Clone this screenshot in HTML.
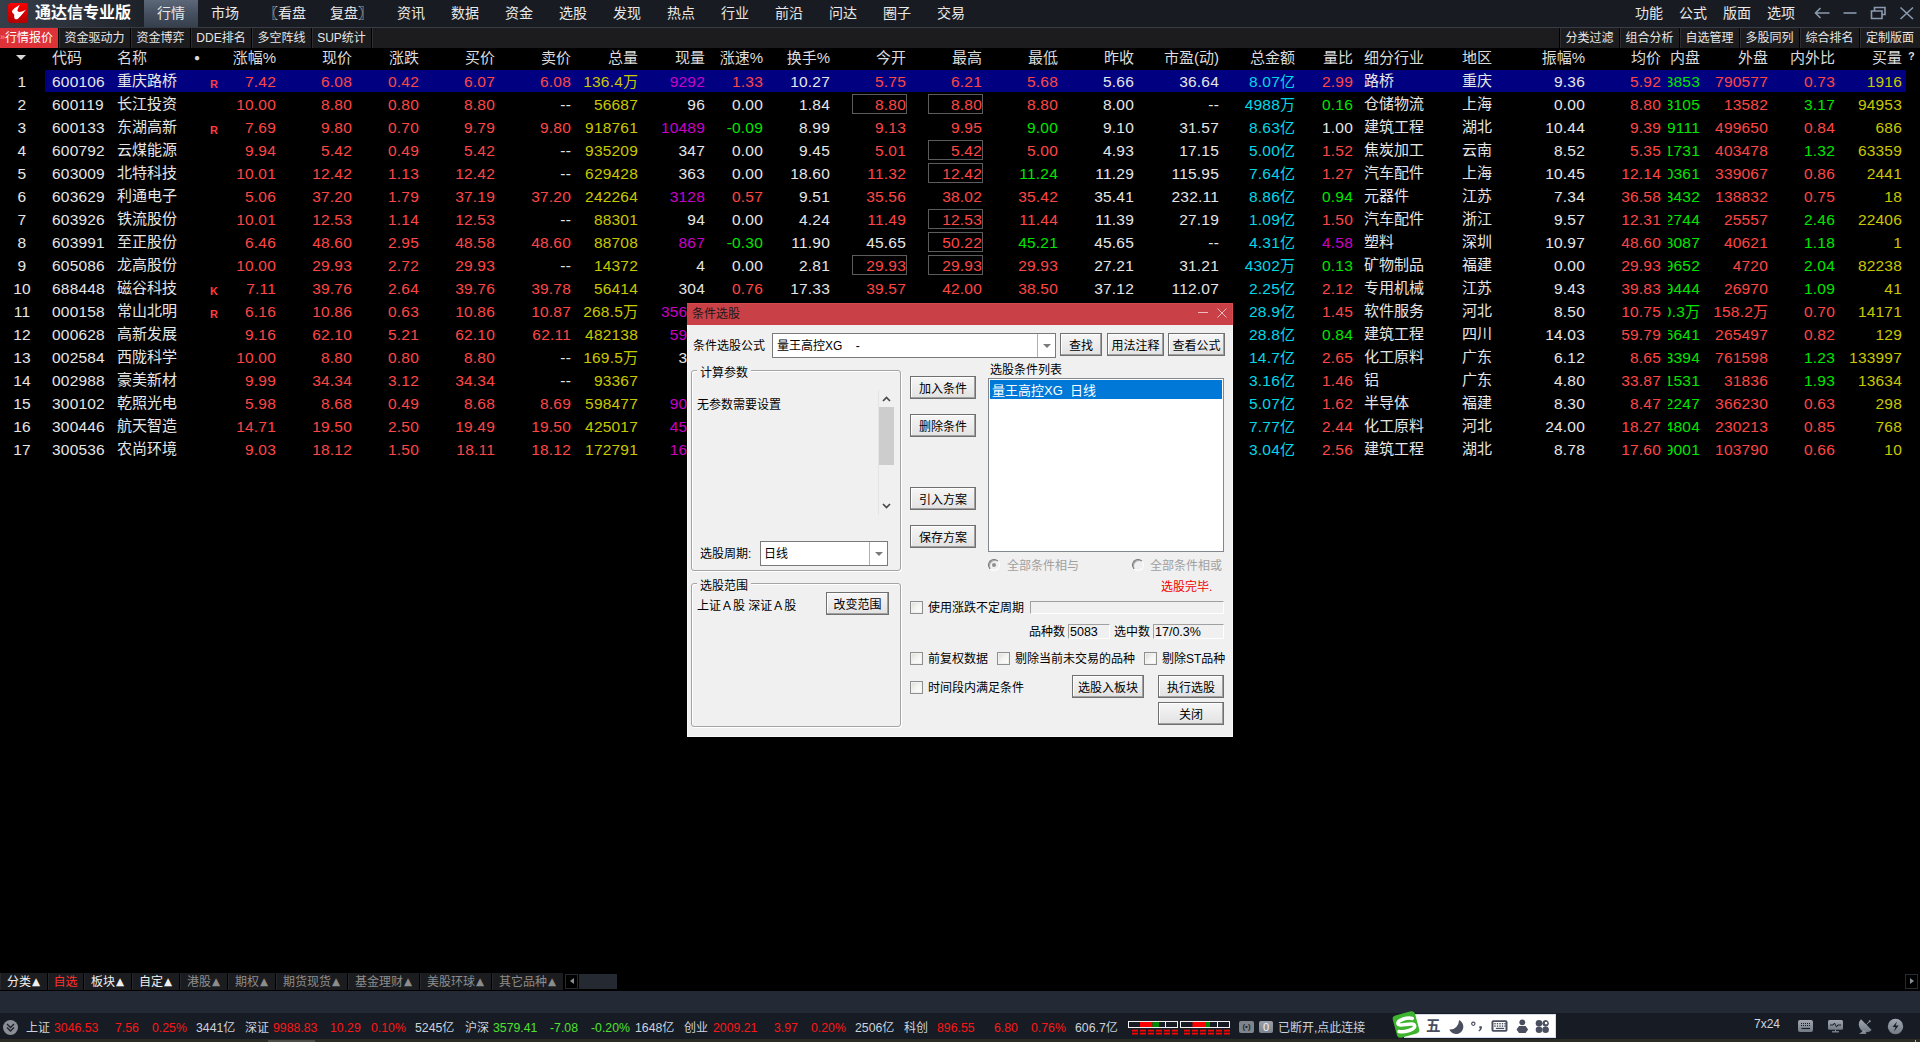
<!DOCTYPE html>
<html lang="zh-CN">
<head>
<meta charset="utf-8">
<title>通达信专业版</title>
<style>
*{box-sizing:border-box;margin:0;padding:0}
html,body{width:1920px;height:1042px;overflow:hidden;background:#000}
body{position:relative;font-family:"Liberation Sans","Noto Sans CJK SC",sans-serif;color:#e6e6e6}
div{position:absolute;white-space:nowrap}
/* title bar */
#tb{left:0;top:0;width:1920px;height:27px;background:#181c22}
#tbl{left:0;top:0;width:144px;height:27px;background:linear-gradient(90deg,#363e4a 0%,#2c323c 50%,#1d2128 100%)}
#logo{left:8px;top:3px;width:20px;height:20px;border-radius:3px;background:linear-gradient(180deg,#ff0000,#b00000)}
#ttl{left:35px;top:0;height:27px;line-height:25px;font-size:16px;font-weight:bold;color:#fff}
.mi{top:0;height:27px;line-height:27px;font-size:14px;color:#e8e8e8;text-align:center;width:54px}
.mi.act{background:linear-gradient(180deg,#5c6878 0%,#465060 50%,#363f4c 100%)}
.mr{top:0;height:27px;line-height:27px;font-size:14px;color:#e8e8e8}
/* second bar */
#sb{left:0;top:27px;width:1920px;height:21px;background:#1c1c1e;border-top:1px solid #383c46}
.st{top:28px;height:20px;line-height:21px;font-size:12px;color:#e6e6e6;text-align:center;box-shadow:1px 0 0 #000,2px 0 0 #2e2e32}
.st.act{background:#dc3238;color:#fff}
/* table */
#hdr{left:0;top:48px;width:1920px;height:22px}
.h{top:0;height:22px;line-height:20px;font-size:15px;color:#dcdcdc}
.r{text-align:right}
.tri{left:16px;top:7px;width:0;height:0;border-left:5px solid transparent;border-right:5px solid transparent;border-top:5px solid #d8d8d8}
.row{left:0;width:1920px;height:23px}
.selbg{left:45px;top:0;width:1861px;height:22px;background:#000080}
.n{top:0;height:22px;line-height:24px;font-size:15.5px;letter-spacing:.2px}
.z{top:0;height:22px;line-height:21px;font-size:15px}
.c{font-size:15px;letter-spacing:0}
.mk{top:8px;font-size:11px;font-weight:bold;color:#ff3c3c;line-height:12px}
.bx{top:1px;width:55px;height:20px;border:1px solid #5c5c5c}
.clipnp{left:1668px;width:32px;overflow:hidden;height:22px}
.clipnp>span{position:absolute;right:0;top:0}
#dlg{left:687px;top:303px;width:546px;height:434px;background:#f0f0f0;box-shadow:inset 0 0 0 1px #f8f8f8;color:#000;font-size:12px}
#dlg div{font-size:12px}
#dlg .li{font-size:13px}
#dt{left:0;top:0;width:546px;height:22px;background:#c94047;box-shadow:inset 0 1px 0 #d84a52,inset -1px 0 0 #dc4c54;color:#1a1a1a;line-height:21px}
.dl{line-height:16px;height:16px;color:#000;margin-top:1px}
.dis{color:#a0a0a0}
.gl{line-height:17px;height:16px;background:#f0f0f0;padding:0 3px;color:#000}
.gb{border:1px solid #a4a4a4;border-radius:3px;box-shadow:inset 1px 1px 0 #fff, 1px 1px 0 #fff}
.cb{background:#fff;border:1px solid #7a7a7a}
.cb .ct{position:absolute;left:4px;top:0;line-height:25px}
.cb .ca{position:absolute;right:0;top:0;bottom:0;width:18px;border-left:1px solid #b0b0b0}
.cb .ca:after{content:"";position:absolute;left:5px;top:10px;border-left:4px solid transparent;border-right:4px solid transparent;border-top:4px solid #7a7a7a}
.bt{background:linear-gradient(180deg,#f6f6f6,#e2e2e2);border:1px solid #707070;box-shadow:inset -1px -1px 0 #a0a0a0, inset 1px 1px 0 #fff;text-align:center;line-height:24px;color:#000}
.lb{background:#fff;border:1px solid #828790}
.li{left:1px;top:1px;right:1px;height:19px;background:#0078d7;color:#fff;line-height:21px;padding-left:2px}
.rd{width:12px;height:12px;border-radius:50%;border:1px solid;border-color:#707070 #fff #fff #707070;background:#f0f0f0;box-shadow:inset 1px 1px 0 #a8a8a8;transform:rotate(0deg)}
.rdd{width:4px;height:4px;border-radius:50%;background:#909090}
.ck{width:13px;height:13px;border:1px solid #8e8f8f;background:linear-gradient(135deg,#dcdad2,#f4f4f2 50%,#fff);box-shadow:inset 0 0 0 1px #f0f0f0}
.fd{border:1px solid;border-color:#a0a0a0 #fff #fff #a0a0a0;background:#f0f0f0}
.fd span{position:absolute;left:1px;top:0;line-height:15px;font-size:12.5px}

#bt1{left:0;top:973px;width:1920px;height:18px;background:#000}
.bt2{top:973px;height:17px;line-height:18px;font-size:12px;color:#8c8c8c;background:#1b1c1f;text-align:center;box-shadow:inset 1px 0 0 #26272a}
.bt2 b{font-weight:normal;font-size:10.5px;line-height:10px;display:inline-block;vertical-align:1px;margin-left:1px;font-family:"DejaVu Sans","Noto Sans CJK SC",sans-serif}
.bt2.w{color:#f0f0f0}
.bt2.rr{color:#ff3030}
#sb1{left:0;top:991px;width:1920px;height:22px;background:#232a35}
#sb2{left:0;top:1013px;width:1920px;height:27px;background:#171c24}
#sb3{left:0;top:1039px;width:1920px;height:3px;background:#2b2d24}
.s{top:1019px;height:18px;line-height:19px;font-size:12.3px;color:#ccd2dc}
.s span,.s.z{font-size:12px}
.r_{color:#f81818}
.g_{color:#50e030}
#ime{left:1404px;top:1014px;width:152px;height:24px;background:#fff;box-shadow:inset 0 0 0 1px #d4daf0}

</style>
</head>
<body>
<div id="tb"></div>
<div id="tbl"></div>
<div id="logo"></div>
<svg style="position:absolute;left:8px;top:3px" width="20" height="20" viewBox="0 0 20 20"><path d="M11.8 2.1C9 3.500 5 6 4 8.300C4.200 10 5.500 11 6.300 11.700C6 13 6 15 7.100 16.100C8 16.500 9.300 16.300 10 15.800C12.500 13 15.500 10 18 6.500C15.500 8 12.500 9.300 10.500 8.800C9.300 8.300 9.300 7.500 9.600 6.500C10 5 11 3.500 11.800 2.100Z" fill="#fff"/></svg>
<div id="ttl">通达信专业版</div>
<div class="mi act" style="left:144px">行情</div>
<div class="mi" style="left:198px">市场</div>
<div class="mi" style="left:252px;width:66px">〖看盘</div>
<div class="mi" style="left:318px;width:66px">复盘〗</div>
<div class="mi" style="left:384px">资讯</div>
<div class="mi" style="left:438px">数据</div>
<div class="mi" style="left:492px">资金</div>
<div class="mi" style="left:546px">选股</div>
<div class="mi" style="left:600px">发现</div>
<div class="mi" style="left:654px">热点</div>
<div class="mi" style="left:708px">行业</div>
<div class="mi" style="left:762px">前沿</div>
<div class="mi" style="left:816px">问达</div>
<div class="mi" style="left:870px">圈子</div>
<div class="mi" style="left:924px">交易</div>
<div class="mr" style="left:1635px">功能</div>
<div class="mr" style="left:1679px">公式</div>
<div class="mr" style="left:1723px">版面</div>
<div class="mr" style="left:1767px">选项</div>
<svg style="position:absolute;left:1812px;top:4px" width="104" height="18" viewBox="0 0 104 18"><g fill="none" stroke="#8b99ae" stroke-width="1.600"><path d="M3.500 9h14M8.500 4l-5 5l5 5"/><path d="M31.500 9h13"/><path d="M62.500 6.500v-3h10.500v7h-3M59.500 7h10.500v7.500h-10.500z"/><path d="M88.500 3.500l12.500 11.500M101 3.500l-12.500 11.500"/></g></svg>
<div id="sb"></div>
<div class="st act" style="left:0;width:58px">行情报价</div><div style="left:0;top:30px;font-size:9px;line-height:14px;color:#f4a0a4">»</div>
<div class="st" style="left:59px;width:71px">资金驱动力</div>
<div class="st" style="left:131px;width:59px">资金博弈</div>
<div class="st" style="left:191px;width:60px">DDE排名</div>
<div class="st" style="left:252px;width:59px">多空阵线</div>
<div class="st" style="left:312px;width:59px">SUP统计</div>
<div class="st" style="left:1560px;width:59px;box-shadow:1px 0 0 #000,2px 0 0 #2e2e32,-1px 0 0 #000,inset 1px 0 0 #2e2e32">分类过滤</div>
<div class="st" style="left:1620px;width:59px">组合分析</div>
<div class="st" style="left:1680px;width:59px">自选管理</div>
<div class="st" style="left:1740px;width:59px">多股同列</div>
<div class="st" style="left:1800px;width:59px">综合排名</div>
<div class="st" style="left:1860px;width:60px;box-shadow:none">定制版面</div>
<div id="hdr">
<div class="tri"></div>
<div class="h" style="left:52px">代码</div>
<div class="h" style="left:117px">名称</div>
<div class="h r" style="left:156px;width:120px">涨幅%</div>
<div class="h r" style="left:232px;width:120px">现价</div>
<div class="h r" style="left:299px;width:120px">涨跌</div>
<div class="h r" style="left:375px;width:120px">买价</div>
<div class="h r" style="left:451px;width:120px">卖价</div>
<div class="h r" style="left:518px;width:120px">总量</div>
<div class="h r" style="left:585px;width:120px">现量</div>
<div class="h r" style="left:643px;width:120px">涨速%</div>
<div class="h r" style="left:710px;width:120px">换手%</div>
<div class="h r" style="left:786px;width:120px">今开</div>
<div class="h r" style="left:862px;width:120px">最高</div>
<div class="h r" style="left:938px;width:120px">最低</div>
<div class="h r" style="left:1014px;width:120px">昨收</div>
<div class="h r" style="left:1099px;width:120px">市盈(动)</div>
<div class="h r" style="left:1175px;width:120px">总金额</div>
<div class="h r" style="left:1233px;width:120px">量比</div>
<div class="h" style="left:1364px">细分行业</div>
<div class="h" style="left:1462px">地区</div>
<div class="h r" style="left:1465px;width:120px">振幅%</div>
<div class="h r" style="left:1541px;width:120px">均价</div>
<div class="h r" style="left:1580px;width:120px">内盘</div>
<div class="h r" style="left:1648px;width:120px">外盘</div>
<div class="h r" style="left:1715px;width:120px">内外比</div>
<div class="h r" style="left:1782px;width:120px">买量</div>
<div class="h" style="left:194px;font-size:10px">●</div>
<div class="h" style="left:1908px;top:-2px;font-size:11px;font-weight:bold">?</div>
</div>
<div class="row sel" style="top:70px">
<div class="selbg"></div>
<div class="n" style="left:0;width:44px;text-align:center;color:#e6e6e6">1</div>
<div class="n" style="left:52px;color:#e6e6e6">600106</div>
<div class="z" style="left:117px;color:#e6e6e6">重庆路桥</div>
<div class="mk" style="left:210px">R</div>
<div class="n r" style="left:156px;width:120px;color:#ff4646">7.42</div>
<div class="n r" style="left:232px;width:120px;color:#ff4646">6.08</div>
<div class="n r" style="left:299px;width:120px;color:#ff4646">0.42</div>
<div class="n r" style="left:375px;width:120px;color:#ff4646">6.07</div>
<div class="n r" style="left:451px;width:120px;color:#ff4646">6.08</div>
<div class="n r" style="left:518px;width:120px;color:#c8c800">136.4<span class="c">万</span></div>
<div class="n r" style="left:585px;width:120px;color:#c800c8">9292</div>
<div class="n r" style="left:643px;width:120px;color:#ff4646">1.33</div>
<div class="n r" style="left:710px;width:120px;color:#e6e6e6">10.27</div>
<div class="n r" style="left:786px;width:120px;color:#ff4646">5.75</div>
<div class="n r" style="left:862px;width:120px;color:#ff4646">6.21</div>
<div class="n r" style="left:938px;width:120px;color:#ff4646">5.68</div>
<div class="n r" style="left:1014px;width:120px;color:#e6e6e6">5.66</div>
<div class="n r" style="left:1099px;width:120px;color:#e6e6e6">36.64</div>
<div class="n r" style="left:1175px;width:120px;color:#00d8e8">8.07<span class="c">亿</span></div>
<div class="n r" style="left:1233px;width:120px;color:#ff4646">2.99</div>
<div class="z" style="left:1364px;color:#e6e6e6">路桥</div>
<div class="z" style="left:1462px;color:#e6e6e6">重庆</div>
<div class="n r" style="left:1465px;width:120px;color:#e6e6e6">9.36</div>
<div class="n r" style="left:1541px;width:120px;color:#ff4646">5.92</div>
<div class="n r clipnp" style="color:#00e600"><span>833853</span></div>
<div class="n r" style="left:1648px;width:120px;color:#ff4646">790577</div>
<div class="n r" style="left:1715px;width:120px;color:#ff4646">0.73</div>
<div class="n r" style="left:1782px;width:120px;color:#c8c800">1916</div>
</div>
<div class="row" style="top:93px">
<div class="n" style="left:0;width:44px;text-align:center;color:#e6e6e6">2</div>
<div class="n" style="left:52px;color:#e6e6e6">600119</div>
<div class="z" style="left:117px;color:#e6e6e6">长江投资</div>
<div class="n r" style="left:156px;width:120px;color:#ff4646">10.00</div>
<div class="n r" style="left:232px;width:120px;color:#ff4646">8.80</div>
<div class="n r" style="left:299px;width:120px;color:#ff4646">0.80</div>
<div class="n r" style="left:375px;width:120px;color:#ff4646">8.80</div>
<div class="n r" style="left:451px;width:120px;color:#e6e6e6">--</div>
<div class="n r" style="left:518px;width:120px;color:#c8c800">56687</div>
<div class="n r" style="left:585px;width:120px;color:#e6e6e6">96</div>
<div class="n r" style="left:643px;width:120px;color:#e6e6e6">0.00</div>
<div class="n r" style="left:710px;width:120px;color:#e6e6e6">1.84</div>
<div class="n r" style="left:786px;width:120px;color:#ff4646">8.80</div><div class="bx" style="left:852px"></div>
<div class="n r" style="left:862px;width:120px;color:#ff4646">8.80</div><div class="bx" style="left:928px"></div>
<div class="n r" style="left:938px;width:120px;color:#ff4646">8.80</div>
<div class="n r" style="left:1014px;width:120px;color:#e6e6e6">8.00</div>
<div class="n r" style="left:1099px;width:120px;color:#e6e6e6">--</div>
<div class="n r" style="left:1175px;width:120px;color:#00d8e8">4988<span class="c">万</span></div>
<div class="n r" style="left:1233px;width:120px;color:#00e600">0.16</div>
<div class="z" style="left:1364px;color:#e6e6e6">仓储物流</div>
<div class="z" style="left:1462px;color:#e6e6e6">上海</div>
<div class="n r" style="left:1465px;width:120px;color:#e6e6e6">0.00</div>
<div class="n r" style="left:1541px;width:120px;color:#ff4646">8.80</div>
<div class="n r clipnp" style="color:#00e600"><span>43105</span></div>
<div class="n r" style="left:1648px;width:120px;color:#ff4646">13582</div>
<div class="n r" style="left:1715px;width:120px;color:#00e600">3.17</div>
<div class="n r" style="left:1782px;width:120px;color:#c8c800">94953</div>
</div>
<div class="row" style="top:116px">
<div class="n" style="left:0;width:44px;text-align:center;color:#e6e6e6">3</div>
<div class="n" style="left:52px;color:#e6e6e6">600133</div>
<div class="z" style="left:117px;color:#e6e6e6">东湖高新</div>
<div class="mk" style="left:210px">R</div>
<div class="n r" style="left:156px;width:120px;color:#ff4646">7.69</div>
<div class="n r" style="left:232px;width:120px;color:#ff4646">9.80</div>
<div class="n r" style="left:299px;width:120px;color:#ff4646">0.70</div>
<div class="n r" style="left:375px;width:120px;color:#ff4646">9.79</div>
<div class="n r" style="left:451px;width:120px;color:#ff4646">9.80</div>
<div class="n r" style="left:518px;width:120px;color:#c8c800">918761</div>
<div class="n r" style="left:585px;width:120px;color:#c800c8">10489</div>
<div class="n r" style="left:643px;width:120px;color:#00e600">-0.09</div>
<div class="n r" style="left:710px;width:120px;color:#e6e6e6">8.99</div>
<div class="n r" style="left:786px;width:120px;color:#ff4646">9.13</div>
<div class="n r" style="left:862px;width:120px;color:#ff4646">9.95</div>
<div class="n r" style="left:938px;width:120px;color:#00e600">9.00</div>
<div class="n r" style="left:1014px;width:120px;color:#e6e6e6">9.10</div>
<div class="n r" style="left:1099px;width:120px;color:#e6e6e6">31.57</div>
<div class="n r" style="left:1175px;width:120px;color:#00d8e8">8.63<span class="c">亿</span></div>
<div class="n r" style="left:1233px;width:120px;color:#e6e6e6">1.00</div>
<div class="z" style="left:1364px;color:#e6e6e6">建筑工程</div>
<div class="z" style="left:1462px;color:#e6e6e6">湖北</div>
<div class="n r" style="left:1465px;width:120px;color:#e6e6e6">10.44</div>
<div class="n r" style="left:1541px;width:120px;color:#ff4646">9.39</div>
<div class="n r clipnp" style="color:#00e600"><span>419111</span></div>
<div class="n r" style="left:1648px;width:120px;color:#ff4646">499650</div>
<div class="n r" style="left:1715px;width:120px;color:#ff4646">0.84</div>
<div class="n r" style="left:1782px;width:120px;color:#c8c800">686</div>
</div>
<div class="row" style="top:139px">
<div class="n" style="left:0;width:44px;text-align:center;color:#e6e6e6">4</div>
<div class="n" style="left:52px;color:#e6e6e6">600792</div>
<div class="z" style="left:117px;color:#e6e6e6">云煤能源</div>
<div class="n r" style="left:156px;width:120px;color:#ff4646">9.94</div>
<div class="n r" style="left:232px;width:120px;color:#ff4646">5.42</div>
<div class="n r" style="left:299px;width:120px;color:#ff4646">0.49</div>
<div class="n r" style="left:375px;width:120px;color:#ff4646">5.42</div>
<div class="n r" style="left:451px;width:120px;color:#e6e6e6">--</div>
<div class="n r" style="left:518px;width:120px;color:#c8c800">935209</div>
<div class="n r" style="left:585px;width:120px;color:#e6e6e6">347</div>
<div class="n r" style="left:643px;width:120px;color:#e6e6e6">0.00</div>
<div class="n r" style="left:710px;width:120px;color:#e6e6e6">9.45</div>
<div class="n r" style="left:786px;width:120px;color:#ff4646">5.01</div>
<div class="n r" style="left:862px;width:120px;color:#ff4646">5.42</div><div class="bx" style="left:928px"></div>
<div class="n r" style="left:938px;width:120px;color:#ff4646">5.00</div>
<div class="n r" style="left:1014px;width:120px;color:#e6e6e6">4.93</div>
<div class="n r" style="left:1099px;width:120px;color:#e6e6e6">17.15</div>
<div class="n r" style="left:1175px;width:120px;color:#00d8e8">5.00<span class="c">亿</span></div>
<div class="n r" style="left:1233px;width:120px;color:#ff4646">1.52</div>
<div class="z" style="left:1364px;color:#e6e6e6">焦炭加工</div>
<div class="z" style="left:1462px;color:#e6e6e6">云南</div>
<div class="n r" style="left:1465px;width:120px;color:#e6e6e6">8.52</div>
<div class="n r" style="left:1541px;width:120px;color:#ff4646">5.35</div>
<div class="n r clipnp" style="color:#00e600"><span>531731</span></div>
<div class="n r" style="left:1648px;width:120px;color:#ff4646">403478</div>
<div class="n r" style="left:1715px;width:120px;color:#00e600">1.32</div>
<div class="n r" style="left:1782px;width:120px;color:#c8c800">63359</div>
</div>
<div class="row" style="top:162px">
<div class="n" style="left:0;width:44px;text-align:center;color:#e6e6e6">5</div>
<div class="n" style="left:52px;color:#e6e6e6">603009</div>
<div class="z" style="left:117px;color:#e6e6e6">北特科技</div>
<div class="n r" style="left:156px;width:120px;color:#ff4646">10.01</div>
<div class="n r" style="left:232px;width:120px;color:#ff4646">12.42</div>
<div class="n r" style="left:299px;width:120px;color:#ff4646">1.13</div>
<div class="n r" style="left:375px;width:120px;color:#ff4646">12.42</div>
<div class="n r" style="left:451px;width:120px;color:#e6e6e6">--</div>
<div class="n r" style="left:518px;width:120px;color:#c8c800">629428</div>
<div class="n r" style="left:585px;width:120px;color:#e6e6e6">363</div>
<div class="n r" style="left:643px;width:120px;color:#e6e6e6">0.00</div>
<div class="n r" style="left:710px;width:120px;color:#e6e6e6">18.60</div>
<div class="n r" style="left:786px;width:120px;color:#ff4646">11.32</div>
<div class="n r" style="left:862px;width:120px;color:#ff4646">12.42</div><div class="bx" style="left:928px"></div>
<div class="n r" style="left:938px;width:120px;color:#00e600">11.24</div>
<div class="n r" style="left:1014px;width:120px;color:#e6e6e6">11.29</div>
<div class="n r" style="left:1099px;width:120px;color:#e6e6e6">115.95</div>
<div class="n r" style="left:1175px;width:120px;color:#00d8e8">7.64<span class="c">亿</span></div>
<div class="n r" style="left:1233px;width:120px;color:#ff4646">1.27</div>
<div class="z" style="left:1364px;color:#e6e6e6">汽车配件</div>
<div class="z" style="left:1462px;color:#e6e6e6">上海</div>
<div class="n r" style="left:1465px;width:120px;color:#e6e6e6">10.45</div>
<div class="n r" style="left:1541px;width:120px;color:#ff4646">12.14</div>
<div class="n r clipnp" style="color:#00e600"><span>290361</span></div>
<div class="n r" style="left:1648px;width:120px;color:#ff4646">339067</div>
<div class="n r" style="left:1715px;width:120px;color:#ff4646">0.86</div>
<div class="n r" style="left:1782px;width:120px;color:#c8c800">2441</div>
</div>
<div class="row" style="top:185px">
<div class="n" style="left:0;width:44px;text-align:center;color:#e6e6e6">6</div>
<div class="n" style="left:52px;color:#e6e6e6">603629</div>
<div class="z" style="left:117px;color:#e6e6e6">利通电子</div>
<div class="n r" style="left:156px;width:120px;color:#ff4646">5.06</div>
<div class="n r" style="left:232px;width:120px;color:#ff4646">37.20</div>
<div class="n r" style="left:299px;width:120px;color:#ff4646">1.79</div>
<div class="n r" style="left:375px;width:120px;color:#ff4646">37.19</div>
<div class="n r" style="left:451px;width:120px;color:#ff4646">37.20</div>
<div class="n r" style="left:518px;width:120px;color:#c8c800">242264</div>
<div class="n r" style="left:585px;width:120px;color:#c800c8">3128</div>
<div class="n r" style="left:643px;width:120px;color:#ff4646">0.57</div>
<div class="n r" style="left:710px;width:120px;color:#e6e6e6">9.51</div>
<div class="n r" style="left:786px;width:120px;color:#ff4646">35.56</div>
<div class="n r" style="left:862px;width:120px;color:#ff4646">38.02</div>
<div class="n r" style="left:938px;width:120px;color:#ff4646">35.42</div>
<div class="n r" style="left:1014px;width:120px;color:#e6e6e6">35.41</div>
<div class="n r" style="left:1099px;width:120px;color:#e6e6e6">232.11</div>
<div class="n r" style="left:1175px;width:120px;color:#00d8e8">8.86<span class="c">亿</span></div>
<div class="n r" style="left:1233px;width:120px;color:#00e600">0.94</div>
<div class="z" style="left:1364px;color:#e6e6e6">元器件</div>
<div class="z" style="left:1462px;color:#e6e6e6">江苏</div>
<div class="n r" style="left:1465px;width:120px;color:#e6e6e6">7.34</div>
<div class="n r" style="left:1541px;width:120px;color:#ff4646">36.58</div>
<div class="n r clipnp" style="color:#00e600"><span>103432</span></div>
<div class="n r" style="left:1648px;width:120px;color:#ff4646">138832</div>
<div class="n r" style="left:1715px;width:120px;color:#ff4646">0.75</div>
<div class="n r" style="left:1782px;width:120px;color:#c8c800">18</div>
</div>
<div class="row" style="top:208px">
<div class="n" style="left:0;width:44px;text-align:center;color:#e6e6e6">7</div>
<div class="n" style="left:52px;color:#e6e6e6">603926</div>
<div class="z" style="left:117px;color:#e6e6e6">铁流股份</div>
<div class="n r" style="left:156px;width:120px;color:#ff4646">10.01</div>
<div class="n r" style="left:232px;width:120px;color:#ff4646">12.53</div>
<div class="n r" style="left:299px;width:120px;color:#ff4646">1.14</div>
<div class="n r" style="left:375px;width:120px;color:#ff4646">12.53</div>
<div class="n r" style="left:451px;width:120px;color:#e6e6e6">--</div>
<div class="n r" style="left:518px;width:120px;color:#c8c800">88301</div>
<div class="n r" style="left:585px;width:120px;color:#e6e6e6">94</div>
<div class="n r" style="left:643px;width:120px;color:#e6e6e6">0.00</div>
<div class="n r" style="left:710px;width:120px;color:#e6e6e6">4.24</div>
<div class="n r" style="left:786px;width:120px;color:#ff4646">11.49</div>
<div class="n r" style="left:862px;width:120px;color:#ff4646">12.53</div><div class="bx" style="left:928px"></div>
<div class="n r" style="left:938px;width:120px;color:#ff4646">11.44</div>
<div class="n r" style="left:1014px;width:120px;color:#e6e6e6">11.39</div>
<div class="n r" style="left:1099px;width:120px;color:#e6e6e6">27.19</div>
<div class="n r" style="left:1175px;width:120px;color:#00d8e8">1.09<span class="c">亿</span></div>
<div class="n r" style="left:1233px;width:120px;color:#ff4646">1.50</div>
<div class="z" style="left:1364px;color:#e6e6e6">汽车配件</div>
<div class="z" style="left:1462px;color:#e6e6e6">浙江</div>
<div class="n r" style="left:1465px;width:120px;color:#e6e6e6">9.57</div>
<div class="n r" style="left:1541px;width:120px;color:#ff4646">12.31</div>
<div class="n r clipnp" style="color:#00e600"><span>62744</span></div>
<div class="n r" style="left:1648px;width:120px;color:#ff4646">25557</div>
<div class="n r" style="left:1715px;width:120px;color:#00e600">2.46</div>
<div class="n r" style="left:1782px;width:120px;color:#c8c800">22406</div>
</div>
<div class="row" style="top:231px">
<div class="n" style="left:0;width:44px;text-align:center;color:#e6e6e6">8</div>
<div class="n" style="left:52px;color:#e6e6e6">603991</div>
<div class="z" style="left:117px;color:#e6e6e6">至正股份</div>
<div class="n r" style="left:156px;width:120px;color:#ff4646">6.46</div>
<div class="n r" style="left:232px;width:120px;color:#ff4646">48.60</div>
<div class="n r" style="left:299px;width:120px;color:#ff4646">2.95</div>
<div class="n r" style="left:375px;width:120px;color:#ff4646">48.58</div>
<div class="n r" style="left:451px;width:120px;color:#ff4646">48.60</div>
<div class="n r" style="left:518px;width:120px;color:#c8c800">88708</div>
<div class="n r" style="left:585px;width:120px;color:#c800c8">867</div>
<div class="n r" style="left:643px;width:120px;color:#00e600">-0.30</div>
<div class="n r" style="left:710px;width:120px;color:#e6e6e6">11.90</div>
<div class="n r" style="left:786px;width:120px;color:#e6e6e6">45.65</div>
<div class="n r" style="left:862px;width:120px;color:#ff4646">50.22</div><div class="bx" style="left:928px"></div>
<div class="n r" style="left:938px;width:120px;color:#00e600">45.21</div>
<div class="n r" style="left:1014px;width:120px;color:#e6e6e6">45.65</div>
<div class="n r" style="left:1099px;width:120px;color:#e6e6e6">--</div>
<div class="n r" style="left:1175px;width:120px;color:#00d8e8">4.31<span class="c">亿</span></div>
<div class="n r" style="left:1233px;width:120px;color:#c800c8">4.58</div>
<div class="z" style="left:1364px;color:#e6e6e6">塑料</div>
<div class="z" style="left:1462px;color:#e6e6e6">深圳</div>
<div class="n r" style="left:1465px;width:120px;color:#e6e6e6">10.97</div>
<div class="n r" style="left:1541px;width:120px;color:#ff4646">48.60</div>
<div class="n r clipnp" style="color:#00e600"><span>48087</span></div>
<div class="n r" style="left:1648px;width:120px;color:#ff4646">40621</div>
<div class="n r" style="left:1715px;width:120px;color:#00e600">1.18</div>
<div class="n r" style="left:1782px;width:120px;color:#c8c800">1</div>
</div>
<div class="row" style="top:254px">
<div class="n" style="left:0;width:44px;text-align:center;color:#e6e6e6">9</div>
<div class="n" style="left:52px;color:#e6e6e6">605086</div>
<div class="z" style="left:117px;color:#e6e6e6">龙高股份</div>
<div class="n r" style="left:156px;width:120px;color:#ff4646">10.00</div>
<div class="n r" style="left:232px;width:120px;color:#ff4646">29.93</div>
<div class="n r" style="left:299px;width:120px;color:#ff4646">2.72</div>
<div class="n r" style="left:375px;width:120px;color:#ff4646">29.93</div>
<div class="n r" style="left:451px;width:120px;color:#e6e6e6">--</div>
<div class="n r" style="left:518px;width:120px;color:#c8c800">14372</div>
<div class="n r" style="left:585px;width:120px;color:#e6e6e6">4</div>
<div class="n r" style="left:643px;width:120px;color:#e6e6e6">0.00</div>
<div class="n r" style="left:710px;width:120px;color:#e6e6e6">2.81</div>
<div class="n r" style="left:786px;width:120px;color:#ff4646">29.93</div><div class="bx" style="left:852px"></div>
<div class="n r" style="left:862px;width:120px;color:#ff4646">29.93</div><div class="bx" style="left:928px"></div>
<div class="n r" style="left:938px;width:120px;color:#ff4646">29.93</div>
<div class="n r" style="left:1014px;width:120px;color:#e6e6e6">27.21</div>
<div class="n r" style="left:1099px;width:120px;color:#e6e6e6">31.21</div>
<div class="n r" style="left:1175px;width:120px;color:#00d8e8">4302<span class="c">万</span></div>
<div class="n r" style="left:1233px;width:120px;color:#00e600">0.13</div>
<div class="z" style="left:1364px;color:#e6e6e6">矿物制品</div>
<div class="z" style="left:1462px;color:#e6e6e6">福建</div>
<div class="n r" style="left:1465px;width:120px;color:#e6e6e6">0.00</div>
<div class="n r" style="left:1541px;width:120px;color:#ff4646">29.93</div>
<div class="n r clipnp" style="color:#00e600"><span>9652</span></div>
<div class="n r" style="left:1648px;width:120px;color:#ff4646">4720</div>
<div class="n r" style="left:1715px;width:120px;color:#00e600">2.04</div>
<div class="n r" style="left:1782px;width:120px;color:#c8c800">82238</div>
</div>
<div class="row" style="top:277px">
<div class="n" style="left:0;width:44px;text-align:center;color:#e6e6e6">10</div>
<div class="n" style="left:52px;color:#e6e6e6">688448</div>
<div class="z" style="left:117px;color:#e6e6e6">磁谷科技</div>
<div class="mk" style="left:210px">K</div>
<div class="n r" style="left:156px;width:120px;color:#ff4646">7.11</div>
<div class="n r" style="left:232px;width:120px;color:#ff4646">39.76</div>
<div class="n r" style="left:299px;width:120px;color:#ff4646">2.64</div>
<div class="n r" style="left:375px;width:120px;color:#ff4646">39.76</div>
<div class="n r" style="left:451px;width:120px;color:#ff4646">39.78</div>
<div class="n r" style="left:518px;width:120px;color:#c8c800">56414</div>
<div class="n r" style="left:585px;width:120px;color:#e6e6e6">304</div>
<div class="n r" style="left:643px;width:120px;color:#ff4646">0.76</div>
<div class="n r" style="left:710px;width:120px;color:#e6e6e6">17.33</div>
<div class="n r" style="left:786px;width:120px;color:#ff4646">39.57</div>
<div class="n r" style="left:862px;width:120px;color:#ff4646">42.00</div>
<div class="n r" style="left:938px;width:120px;color:#ff4646">38.50</div>
<div class="n r" style="left:1014px;width:120px;color:#e6e6e6">37.12</div>
<div class="n r" style="left:1099px;width:120px;color:#e6e6e6">112.07</div>
<div class="n r" style="left:1175px;width:120px;color:#00d8e8">2.25<span class="c">亿</span></div>
<div class="n r" style="left:1233px;width:120px;color:#ff4646">2.12</div>
<div class="z" style="left:1364px;color:#e6e6e6">专用机械</div>
<div class="z" style="left:1462px;color:#e6e6e6">江苏</div>
<div class="n r" style="left:1465px;width:120px;color:#e6e6e6">9.43</div>
<div class="n r" style="left:1541px;width:120px;color:#ff4646">39.83</div>
<div class="n r clipnp" style="color:#00e600"><span>29444</span></div>
<div class="n r" style="left:1648px;width:120px;color:#ff4646">26970</div>
<div class="n r" style="left:1715px;width:120px;color:#00e600">1.09</div>
<div class="n r" style="left:1782px;width:120px;color:#c8c800">41</div>
</div>
<div class="row" style="top:300px">
<div class="n" style="left:0;width:44px;text-align:center;color:#e6e6e6">11</div>
<div class="n" style="left:52px;color:#e6e6e6">000158</div>
<div class="z" style="left:117px;color:#e6e6e6">常山北明</div>
<div class="mk" style="left:210px">R</div>
<div class="n r" style="left:156px;width:120px;color:#ff4646">6.16</div>
<div class="n r" style="left:232px;width:120px;color:#ff4646">10.86</div>
<div class="n r" style="left:299px;width:120px;color:#ff4646">0.63</div>
<div class="n r" style="left:375px;width:120px;color:#ff4646">10.86</div>
<div class="n r" style="left:451px;width:120px;color:#ff4646">10.87</div>
<div class="n r" style="left:518px;width:120px;color:#c8c800">268.5<span class="c">万</span></div>
<div class="n r" style="left:585px;width:120px;color:#c800c8">35635</div>
<div class="n r" style="left:643px;width:120px;color:#ff4646">0.18</div>
<div class="n r" style="left:710px;width:120px;color:#e6e6e6">17.15</div>
<div class="n r" style="left:786px;width:120px;color:#ff4646">10.40</div>
<div class="n r" style="left:862px;width:120px;color:#ff4646">11.10</div>
<div class="n r" style="left:938px;width:120px;color:#ff4646">10.23</div>
<div class="n r" style="left:1014px;width:120px;color:#e6e6e6">10.23</div>
<div class="n r" style="left:1099px;width:120px;color:#e6e6e6">--</div>
<div class="n r" style="left:1175px;width:120px;color:#00d8e8">28.9<span class="c">亿</span></div>
<div class="n r" style="left:1233px;width:120px;color:#ff4646">1.45</div>
<div class="z" style="left:1364px;color:#e6e6e6">软件服务</div>
<div class="z" style="left:1462px;color:#e6e6e6">河北</div>
<div class="n r" style="left:1465px;width:120px;color:#e6e6e6">8.50</div>
<div class="n r" style="left:1541px;width:120px;color:#ff4646">10.75</div>
<div class="n r clipnp" style="color:#00e600"><span>100.3<span class="c">万</span></span></div>
<div class="n r" style="left:1648px;width:120px;color:#ff4646">158.2<span class="c">万</span></div>
<div class="n r" style="left:1715px;width:120px;color:#ff4646">0.70</div>
<div class="n r" style="left:1782px;width:120px;color:#c8c800">14171</div>
</div>
<div class="row" style="top:323px">
<div class="n" style="left:0;width:44px;text-align:center;color:#e6e6e6">12</div>
<div class="n" style="left:52px;color:#e6e6e6">000628</div>
<div class="z" style="left:117px;color:#e6e6e6">高新发展</div>
<div class="n r" style="left:156px;width:120px;color:#ff4646">9.16</div>
<div class="n r" style="left:232px;width:120px;color:#ff4646">62.10</div>
<div class="n r" style="left:299px;width:120px;color:#ff4646">5.21</div>
<div class="n r" style="left:375px;width:120px;color:#ff4646">62.10</div>
<div class="n r" style="left:451px;width:120px;color:#ff4646">62.11</div>
<div class="n r" style="left:518px;width:120px;color:#c8c800">482138</div>
<div class="n r" style="left:585px;width:120px;color:#c800c8">5924</div>
<div class="n r" style="left:643px;width:120px;color:#ff4646">0.10</div>
<div class="n r" style="left:710px;width:120px;color:#e6e6e6">16.55</div>
<div class="n r" style="left:786px;width:120px;color:#00e600">55.70</div>
<div class="n r" style="left:862px;width:120px;color:#ff4646">62.58</div>
<div class="n r" style="left:938px;width:120px;color:#00e600">54.60</div>
<div class="n r" style="left:1014px;width:120px;color:#e6e6e6">56.89</div>
<div class="n r" style="left:1099px;width:120px;color:#e6e6e6">--</div>
<div class="n r" style="left:1175px;width:120px;color:#00d8e8">28.8<span class="c">亿</span></div>
<div class="n r" style="left:1233px;width:120px;color:#00e600">0.84</div>
<div class="z" style="left:1364px;color:#e6e6e6">建筑工程</div>
<div class="z" style="left:1462px;color:#e6e6e6">四川</div>
<div class="n r" style="left:1465px;width:120px;color:#e6e6e6">14.03</div>
<div class="n r" style="left:1541px;width:120px;color:#ff4646">59.79</div>
<div class="n r clipnp" style="color:#00e600"><span>216641</span></div>
<div class="n r" style="left:1648px;width:120px;color:#ff4646">265497</div>
<div class="n r" style="left:1715px;width:120px;color:#ff4646">0.82</div>
<div class="n r" style="left:1782px;width:120px;color:#c8c800">129</div>
</div>
<div class="row" style="top:346px">
<div class="n" style="left:0;width:44px;text-align:center;color:#e6e6e6">13</div>
<div class="n" style="left:52px;color:#e6e6e6">002584</div>
<div class="z" style="left:117px;color:#e6e6e6">西陇科学</div>
<div class="n r" style="left:156px;width:120px;color:#ff4646">10.00</div>
<div class="n r" style="left:232px;width:120px;color:#ff4646">8.80</div>
<div class="n r" style="left:299px;width:120px;color:#ff4646">0.80</div>
<div class="n r" style="left:375px;width:120px;color:#ff4646">8.80</div>
<div class="n r" style="left:451px;width:120px;color:#e6e6e6">--</div>
<div class="n r" style="left:518px;width:120px;color:#c8c800">169.5<span class="c">万</span></div>
<div class="n r" style="left:585px;width:120px;color:#e6e6e6">300</div>
<div class="n r" style="left:643px;width:120px;color:#e6e6e6">0.00</div>
<div class="n r" style="left:710px;width:120px;color:#e6e6e6">36.10</div>
<div class="n r" style="left:786px;width:120px;color:#ff4646">8.31</div>
<div class="n r" style="left:862px;width:120px;color:#ff4646">8.80</div><div class="bx" style="left:928px"></div>
<div class="n r" style="left:938px;width:120px;color:#ff4646">8.31</div>
<div class="n r" style="left:1014px;width:120px;color:#e6e6e6">8.00</div>
<div class="n r" style="left:1099px;width:120px;color:#e6e6e6">75.91</div>
<div class="n r" style="left:1175px;width:120px;color:#00d8e8">14.7<span class="c">亿</span></div>
<div class="n r" style="left:1233px;width:120px;color:#ff4646">2.65</div>
<div class="z" style="left:1364px;color:#e6e6e6">化工原料</div>
<div class="z" style="left:1462px;color:#e6e6e6">广东</div>
<div class="n r" style="left:1465px;width:120px;color:#e6e6e6">6.12</div>
<div class="n r" style="left:1541px;width:120px;color:#ff4646">8.65</div>
<div class="n r clipnp" style="color:#00e600"><span>933394</span></div>
<div class="n r" style="left:1648px;width:120px;color:#ff4646">761598</div>
<div class="n r" style="left:1715px;width:120px;color:#00e600">1.23</div>
<div class="n r" style="left:1782px;width:120px;color:#c8c800">133997</div>
</div>
<div class="row" style="top:369px">
<div class="n" style="left:0;width:44px;text-align:center;color:#e6e6e6">14</div>
<div class="n" style="left:52px;color:#e6e6e6">002988</div>
<div class="z" style="left:117px;color:#e6e6e6">豪美新材</div>
<div class="n r" style="left:156px;width:120px;color:#ff4646">9.99</div>
<div class="n r" style="left:232px;width:120px;color:#ff4646">34.34</div>
<div class="n r" style="left:299px;width:120px;color:#ff4646">3.12</div>
<div class="n r" style="left:375px;width:120px;color:#ff4646">34.34</div>
<div class="n r" style="left:451px;width:120px;color:#e6e6e6">--</div>
<div class="n r" style="left:518px;width:120px;color:#c8c800">93367</div>
<div class="n r" style="left:643px;width:120px;color:#e6e6e6">0.00</div>
<div class="n r" style="left:710px;width:120px;color:#e6e6e6">5.59</div>
<div class="n r" style="left:786px;width:120px;color:#ff4646">32.85</div>
<div class="n r" style="left:862px;width:120px;color:#ff4646">34.34</div><div class="bx" style="left:928px"></div>
<div class="n r" style="left:938px;width:120px;color:#ff4646">32.84</div>
<div class="n r" style="left:1014px;width:120px;color:#e6e6e6">31.22</div>
<div class="n r" style="left:1099px;width:120px;color:#e6e6e6">35.16</div>
<div class="n r" style="left:1175px;width:120px;color:#00d8e8">3.16<span class="c">亿</span></div>
<div class="n r" style="left:1233px;width:120px;color:#ff4646">1.46</div>
<div class="z" style="left:1364px;color:#e6e6e6">铝</div>
<div class="z" style="left:1462px;color:#e6e6e6">广东</div>
<div class="n r" style="left:1465px;width:120px;color:#e6e6e6">4.80</div>
<div class="n r" style="left:1541px;width:120px;color:#ff4646">33.87</div>
<div class="n r clipnp" style="color:#00e600"><span>61531</span></div>
<div class="n r" style="left:1648px;width:120px;color:#ff4646">31836</div>
<div class="n r" style="left:1715px;width:120px;color:#00e600">1.93</div>
<div class="n r" style="left:1782px;width:120px;color:#c8c800">13634</div>
</div>
<div class="row" style="top:392px">
<div class="n" style="left:0;width:44px;text-align:center;color:#e6e6e6">15</div>
<div class="n" style="left:52px;color:#e6e6e6">300102</div>
<div class="z" style="left:117px;color:#e6e6e6">乾照光电</div>
<div class="n r" style="left:156px;width:120px;color:#ff4646">5.98</div>
<div class="n r" style="left:232px;width:120px;color:#ff4646">8.68</div>
<div class="n r" style="left:299px;width:120px;color:#ff4646">0.49</div>
<div class="n r" style="left:375px;width:120px;color:#ff4646">8.68</div>
<div class="n r" style="left:451px;width:120px;color:#ff4646">8.69</div>
<div class="n r" style="left:518px;width:120px;color:#c8c800">598477</div>
<div class="n r" style="left:585px;width:120px;color:#c800c8">9051</div>
<div class="n r" style="left:643px;width:120px;color:#ff4646">0.12</div>
<div class="n r" style="left:710px;width:120px;color:#e6e6e6">6.66</div>
<div class="n r" style="left:786px;width:120px;color:#ff4646">8.20</div>
<div class="n r" style="left:862px;width:120px;color:#ff4646">8.88</div>
<div class="n r" style="left:938px;width:120px;color:#ff4646">8.20</div>
<div class="n r" style="left:1014px;width:120px;color:#e6e6e6">8.19</div>
<div class="n r" style="left:1099px;width:120px;color:#e6e6e6">--</div>
<div class="n r" style="left:1175px;width:120px;color:#00d8e8">5.07<span class="c">亿</span></div>
<div class="n r" style="left:1233px;width:120px;color:#ff4646">1.62</div>
<div class="z" style="left:1364px;color:#e6e6e6">半导体</div>
<div class="z" style="left:1462px;color:#e6e6e6">福建</div>
<div class="n r" style="left:1465px;width:120px;color:#e6e6e6">8.30</div>
<div class="n r" style="left:1541px;width:120px;color:#ff4646">8.47</div>
<div class="n r clipnp" style="color:#00e600"><span>232247</span></div>
<div class="n r" style="left:1648px;width:120px;color:#ff4646">366230</div>
<div class="n r" style="left:1715px;width:120px;color:#ff4646">0.63</div>
<div class="n r" style="left:1782px;width:120px;color:#c8c800">298</div>
</div>
<div class="row" style="top:415px">
<div class="n" style="left:0;width:44px;text-align:center;color:#e6e6e6">16</div>
<div class="n" style="left:52px;color:#e6e6e6">300446</div>
<div class="z" style="left:117px;color:#e6e6e6">航天智造</div>
<div class="n r" style="left:156px;width:120px;color:#ff4646">14.71</div>
<div class="n r" style="left:232px;width:120px;color:#ff4646">19.50</div>
<div class="n r" style="left:299px;width:120px;color:#ff4646">2.50</div>
<div class="n r" style="left:375px;width:120px;color:#ff4646">19.49</div>
<div class="n r" style="left:451px;width:120px;color:#ff4646">19.50</div>
<div class="n r" style="left:518px;width:120px;color:#c8c800">425017</div>
<div class="n r" style="left:585px;width:120px;color:#c800c8">4521</div>
<div class="n r" style="left:643px;width:120px;color:#ff4646">0.26</div>
<div class="n r" style="left:710px;width:120px;color:#e6e6e6">13.45</div>
<div class="n r" style="left:786px;width:120px;color:#ff4646">17.00</div>
<div class="n r" style="left:862px;width:120px;color:#ff4646">20.40</div>
<div class="n r" style="left:938px;width:120px;color:#00e600">16.90</div>
<div class="n r" style="left:1014px;width:120px;color:#e6e6e6">17.00</div>
<div class="n r" style="left:1099px;width:120px;color:#e6e6e6">38.71</div>
<div class="n r" style="left:1175px;width:120px;color:#00d8e8">7.77<span class="c">亿</span></div>
<div class="n r" style="left:1233px;width:120px;color:#ff4646">2.44</div>
<div class="z" style="left:1364px;color:#e6e6e6">化工原料</div>
<div class="z" style="left:1462px;color:#e6e6e6">河北</div>
<div class="n r" style="left:1465px;width:120px;color:#e6e6e6">24.00</div>
<div class="n r" style="left:1541px;width:120px;color:#ff4646">18.27</div>
<div class="n r clipnp" style="color:#00e600"><span>194804</span></div>
<div class="n r" style="left:1648px;width:120px;color:#ff4646">230213</div>
<div class="n r" style="left:1715px;width:120px;color:#ff4646">0.85</div>
<div class="n r" style="left:1782px;width:120px;color:#c8c800">768</div>
</div>
<div class="row" style="top:438px">
<div class="n" style="left:0;width:44px;text-align:center;color:#e6e6e6">17</div>
<div class="n" style="left:52px;color:#e6e6e6">300536</div>
<div class="z" style="left:117px;color:#e6e6e6">农尚环境</div>
<div class="n r" style="left:156px;width:120px;color:#ff4646">9.03</div>
<div class="n r" style="left:232px;width:120px;color:#ff4646">18.12</div>
<div class="n r" style="left:299px;width:120px;color:#ff4646">1.50</div>
<div class="n r" style="left:375px;width:120px;color:#ff4646">18.11</div>
<div class="n r" style="left:451px;width:120px;color:#ff4646">18.12</div>
<div class="n r" style="left:518px;width:120px;color:#c8c800">172791</div>
<div class="n r" style="left:585px;width:120px;color:#c800c8">1630</div>
<div class="n r" style="left:643px;width:120px;color:#ff4646">0.06</div>
<div class="n r" style="left:710px;width:120px;color:#e6e6e6">9.53</div>
<div class="n r" style="left:786px;width:120px;color:#00e600">16.60</div>
<div class="n r" style="left:862px;width:120px;color:#ff4646">18.30</div>
<div class="n r" style="left:938px;width:120px;color:#00e600">16.52</div>
<div class="n r" style="left:1014px;width:120px;color:#e6e6e6">16.62</div>
<div class="n r" style="left:1099px;width:120px;color:#e6e6e6">--</div>
<div class="n r" style="left:1175px;width:120px;color:#00d8e8">3.04<span class="c">亿</span></div>
<div class="n r" style="left:1233px;width:120px;color:#ff4646">2.56</div>
<div class="z" style="left:1364px;color:#e6e6e6">建筑工程</div>
<div class="z" style="left:1462px;color:#e6e6e6">湖北</div>
<div class="n r" style="left:1465px;width:120px;color:#e6e6e6">8.78</div>
<div class="n r" style="left:1541px;width:120px;color:#ff4646">17.60</div>
<div class="n r clipnp" style="color:#00e600"><span>69001</span></div>
<div class="n r" style="left:1648px;width:120px;color:#ff4646">103790</div>
<div class="n r" style="left:1715px;width:120px;color:#ff4646">0.66</div>
<div class="n r" style="left:1782px;width:120px;color:#c8c800">10</div>
</div>
<div id="dlg">
<div id="dt"><span style="position:absolute;left:5px;top:1px">条件选股</span>
<svg style="position:absolute;left:509px;top:4px" width="32" height="13" viewBox="0 0 32 13"><path d="M2 5.500h10M21.5 1.500l9 9M30.500 1.500l-9 9" stroke="#f0bcc0" stroke-width="1" fill="none"/></svg>
</div>
<div class="dl" style="left:6px;top:34px">条件选股公式</div>
<div class="cb" style="left:85px;top:30px;width:284px;height:25px"><span class="ct">量王高控XG&nbsp;&nbsp;&nbsp;&nbsp;-</span><i class="ca"></i></div>
<div class="bt" style="left:373px;top:30px;width:42px;height:23px">查找</div>
<div class="bt" style="left:420px;top:30px;width:57px;height:23px">用法注释</div>
<div class="bt" style="left:481px;top:30px;width:57px;height:23px">查看公式</div>
<div class="gb" style="left:4px;top:67px;width:210px;height:201px"></div>
<div class="gl" style="left:10px;top:62px">计算参数</div>
<div class="dl" style="left:10px;top:93px">无参数需要设置</div>
<div class="sc" style="left:191px;top:87px;width:17px;height:125px">
<svg style="position:absolute;left:0;top:0" width="17" height="125" viewBox="0 0 17 125"><rect x="0" y="0" width="1" height="125" fill="#e4e4e4"/><rect x="1" y="17" width="15" height="58" fill="#cdcdcd"/><path d="M5 11l3.5-3.5L12 11M5 114l3.5 3.5L12 114" stroke="#484848" stroke-width="1.700" fill="none"/></svg>
</div>
<div class="dl" style="left:13px;top:242px">选股周期:</div>
<div class="cb" style="left:73px;top:238px;width:128px;height:25px"><span class="ct" style="top:0;left:3px">日线</span><i class="ca"></i></div>
<div class="bt" style="left:223px;top:73px;width:66px;height:23px">加入条件</div>
<div class="bt" style="left:223px;top:111px;width:66px;height:23px">删除条件</div>
<div class="bt" style="left:223px;top:184px;width:66px;height:23px">引入方案</div>
<div class="bt" style="left:223px;top:222px;width:66px;height:23px">保存方案</div>
<div class="dl" style="left:303px;top:58px">选股条件列表</div>
<div class="lb" style="left:301px;top:75px;width:236px;height:174px"><div class="li">量王高控XG&nbsp;&nbsp;日线</div></div>
<div class="rd" style="left:301px;top:256px"></div><div class="rdd" style="left:305px;top:260px"></div>
<div class="dl dis" style="left:320px;top:254px">全部条件相与</div>
<div class="rd" style="left:445px;top:256px"></div>
<div class="dl dis" style="left:463px;top:254px">全部条件相或</div>
<div class="dl" style="left:474px;top:275px;color:#f00000">选股完毕.</div>
<div class="gb" style="left:4px;top:280px;width:210px;height:144px"></div>
<div class="gl" style="left:10px;top:275px">选股范围</div>
<div class="dl" style="left:10px;top:294px">上证Ａ股 深证Ａ股</div>
<div class="bt" style="left:139px;top:289px;width:63px;height:23px">改变范围</div>
<div class="ck" style="left:223px;top:298px"></div>
<div class="dl" style="left:241px;top:296px">使用涨跌不定周期</div>
<div class="fd" style="left:343px;top:298px;width:194px;height:13px"></div>
<div class="dl" style="left:342px;top:320px">品种数</div>
<div class="fd" style="left:381px;top:321px;width:42px;height:15px"><span>5083</span></div>
<div class="dl" style="left:427px;top:320px">选中数</div>
<div class="fd" style="left:466px;top:321px;width:71px;height:15px"><span>17/0.3%</span></div>
<div class="ck" style="left:223px;top:349px"></div>
<div class="dl" style="left:241px;top:347px">前复权数据</div>
<div class="ck" style="left:310px;top:349px"></div>
<div class="dl" style="left:328px;top:347px">剔除当前未交易的品种</div>
<div class="ck" style="left:457px;top:349px"></div>
<div class="dl" style="left:475px;top:347px">剔除ST品种</div>
<div class="ck" style="left:223px;top:378px"></div>
<div class="dl" style="left:241px;top:376px">时间段内满足条件</div>
<div class="bt" style="left:385px;top:372px;width:72px;height:23px">选股入板块</div>
<div class="bt" style="left:471px;top:372px;width:66px;height:23px">执行选股</div>
<div class="bt" style="left:471px;top:399px;width:66px;height:23px">关闭</div>
</div>

<div id="bt1"></div>
<div class="bt2 w" style="left:0;width:47px">分类<b>▲</b></div>
<div class="bt2 rr" style="left:48px;width:35px">自选</div>
<div class="bt2 w" style="left:84px;width:47px">板块<b>▲</b></div>
<div class="bt2 w" style="left:132px;width:47px">自定<b>▲</b></div>
<div class="bt2" style="left:180px;width:47px">港股<b>▲</b></div>
<div class="bt2" style="left:228px;width:47px">期权<b>▲</b></div>
<div class="bt2" style="left:276px;width:71px">期货现货<b>▲</b></div>
<div class="bt2" style="left:348px;width:71px">基金理财<b>▲</b></div>
<div class="bt2" style="left:420px;width:71px">美股环球<b>▲</b></div>
<div class="bt2" style="left:492px;width:71px">其它品种<b>▲</b></div>
<div style="left:565px;top:974px;width:13px;height:15px;border:1px solid #252a33;background:#000"></div>
<div style="left:570px;top:978px;width:0;height:0;border-top:3.5px solid transparent;border-bottom:3.5px solid transparent;border-right:4px solid #8a8e96"></div>
<div style="left:579px;top:974px;width:38px;height:15px;background:#242932"></div>
<div style="left:1905px;top:974px;width:13px;height:15px;border:1px solid #252a33;background:#000"></div>
<div style="left:1910px;top:978px;width:0;height:0;border-top:3.5px solid transparent;border-bottom:3.5px solid transparent;border-left:4px solid #8a8e96"></div>
<div id="sb1"></div>
<div id="sb2"></div>
<div id="sb3"></div>
<div style="left:268px;top:1040px;width:47px;height:2px;background:#4c4c48"></div>
<svg style="position:absolute;left:2px;top:1019px" width="17" height="17" viewBox="0 0 17 17"><circle cx="8.5" cy="8.5" r="7.5" fill="#8a8e96"/><path d="M5 5l3.5 3.5L12 5M5 8.5l3.5 3.5L12 8.5" stroke="#1c1f25" stroke-width="1.3" fill="none"/></svg>
<div class="s z" style="left:26px">上证</div><div class="s r_" style="left:54px">3046.53</div><div class="s r_" style="left:115px">7.56</div><div class="s r_" style="left:152px">0.25%</div><div class="s" style="left:196px">3441<span>亿</span></div>
<div class="s z" style="left:245px">深证</div><div class="s r_" style="left:273px">9988.83</div><div class="s r_" style="left:330px">10.29</div><div class="s r_" style="left:371px">0.10%</div><div class="s" style="left:415px">5245<span>亿</span></div>
<div class="s z" style="left:465px">沪深</div><div class="s g_" style="left:493px">3579.41</div><div class="s g_" style="left:550px">-7.08</div><div class="s g_" style="left:591px">-0.20%</div><div class="s" style="left:635px">1648<span>亿</span></div>
<div class="s z" style="left:684px">创业</div><div class="s r_" style="left:713px">2009.21</div><div class="s r_" style="left:774px">3.97</div><div class="s r_" style="left:811px">0.20%</div><div class="s" style="left:855px">2506<span>亿</span></div>
<div class="s z" style="left:904px">科创</div><div class="s r_" style="left:937px">896.55</div><div class="s r_" style="left:994px">6.80</div><div class="s r_" style="left:1031px">0.76%</div><div class="s" style="left:1075px">606.7<span>亿</span></div>
<svg style="position:absolute;left:1127px;top:1020px" width="104" height="16" viewBox="0 0 104 16">
<g fill="none" stroke="#f0f0f0" stroke-width="1"><rect x="1.5" y="1.5" width="49" height="6"/><rect x="53.500" y="1.500" width="49" height="6"/></g>
<rect x="13" y="2" width="12.500" height="5" fill="#ff0000"/><rect x="25.500" y="2" width="6.500" height="5" fill="#008a00"/><rect x="38" y="1" width="1" height="7" fill="#f0f0f0"/>
<rect x="65.500" y="2" width="12.500" height="5" fill="#ff0000"/><rect x="78" y="2" width="5" height="5" fill="#008a00"/><rect x="90" y="1" width="1" height="7" fill="#f0f0f0"/>
<g stroke="#ff0000" stroke-width="1.800" stroke-dasharray="6 2"><path d="M5 10.600h46M5 13.600h46M57 10.600h46M57 13.600h46"/></g>
</svg>
<div style="left:1239px;top:1021px;width:15px;height:12px;border-radius:2px;background:#7e848e"></div>
<div style="left:1239px;top:1021px;width:15px;height:12px;line-height:11px;font-size:8px;color:#22262c;text-align:center;font-weight:bold">(•)</div>
<div style="left:1259px;top:1021px;width:14px;height:12px;border-radius:2px;background:linear-gradient(180deg,#9aa0aa,#7e848e);color:#f4f4f4;font-size:11px;line-height:13px;text-align:center">0</div>
<div class="s z" style="left:1278px">已断开,点此连接</div>
<div id="ime"></div>
<svg style="position:absolute;left:1388px;top:1008px" width="36" height="34" viewBox="0 0 36 34"><g transform="translate(18 16.500) rotate(-15)"><rect x="-11.500" y="-11.500" width="23" height="23" rx="3.500" fill="#3db32e"/><path d="M7.500 -4.300C3 -7 -7.500 -6.500 -7.500 -2.800C-7.500 0.800 8 -0.800 8 3.300C8 7.300 -4 7.300 -8.500 5" fill="none" stroke="#fff" stroke-width="3.600" stroke-linecap="round"/></g></svg>
<div style="left:1426px;top:1015px;height:23px;line-height:23px;font-size:14.5px;font-weight:bold;color:#4a4f60">五</div>
<svg style="position:absolute;left:1446px;top:1014px" width="110" height="23" viewBox="0 0 110 23">
<g fill="#4a4f60">
<path d="M13 6A7.300 7.300 0 1 1 3.300 15.500A9 9 0 0 0 13 6z"/>
<path d="M27.300 7.500a2.200 2.200 0 1 0 0.010 0zm0 1.200a1 1 0 1 1-0.010 0z" fill-rule="evenodd"/>
<path d="M33.300 12.300h2.600c0.300 2.300-0.600 4.200-2.800 5.200l-0.700-1.100c1-0.600 1.500-1.300 1.500-2.200h-0.600z"/>
<path d="M47.200 6.300h12.600a1.700 1.700 0 0 1 1.700 1.700v8a1.700 1.700 0 0 1-1.700 1.700h-12.600a1.700 1.700 0 0 1-1.700-1.700v-8a1.700 1.700 0 0 1 1.700-1.700zm0.300 1.700v8h12v-8z" fill-rule="evenodd"/>
<rect x="48.300" y="9" width="1.400" height="1.400"/><rect x="50.800" y="9" width="1.400" height="1.400"/><rect x="53.300" y="9" width="1.400" height="1.400"/><rect x="55.800" y="9" width="1.400" height="1.400"/><rect x="58.300" y="9" width="1.400" height="1.400"/>
<rect x="48.300" y="11.400" width="1.400" height="1.400"/><rect x="50.800" y="11.400" width="1.400" height="1.400"/><rect x="53.300" y="11.400" width="1.400" height="1.400"/><rect x="55.800" y="11.400" width="1.400" height="1.400"/><rect x="58.300" y="11.400" width="1.400" height="1.400"/>
<rect x="49.800" y="13.800" width="8.400" height="1.300"/>
<circle cx="76.300" cy="8.300" r="2.900"/><path d="M70.500 15.500l2.500-3.600h6.600l2.500 3.600l-2.500 3.400h-6.600z"/>
<circle cx="93" cy="9.300" r="3.300"/><circle cx="93" cy="15.800" r="3.300"/><circle cx="99.600" cy="15.800" r="3.300"/>
<path d="M99.600 6a3.300 3.300 0 1 0 0.010 0zm0.500 1.700a1.300 1.300 0 1 1-0.010 0z" fill-rule="evenodd"/>
</g>
</svg>
<div class="s" style="left:1754px;top:1015px;font-size:12px;color:#d0d6e0">7x24</div>
<svg style="position:absolute;left:1797px;top:1017px" width="112" height="20" viewBox="0 0 112 20">
<defs><linearGradient id="gi" x1="0" y1="0" x2="0" y2="1"><stop offset="0" stop-color="#a2a8b2"/><stop offset="1" stop-color="#747a84"/></linearGradient></defs>
<g fill="url(#gi)">
<rect x="1" y="3" width="15" height="12" rx="2"/>
<rect x="31" y="3" width="15" height="9.700" rx="1.500"/><rect x="38" y="12.700" width="1" height="1.800"/><rect x="35" y="14.300" width="7" height="1.200"/>
<path d="M64 2.200A7.600 7.600 0 0 0 74.700 13z"/><circle cx="72.700" cy="4.300" r="1.100"/><path d="M66.500 13.500l-4.500 3.400h7.500l-1.500-3z"/>
<circle cx="98.500" cy="9.500" r="7.700"/>
</g>
<path d="M69.300 7.600l3.200-3.200" stroke="#8a909a" stroke-width="1"/>
<g fill="none" stroke="#1a1f27" stroke-width="1"><path d="M4 6.500h9.500M4 8.500h9.500" stroke-dasharray="1 1"/><path d="M4.500 11.500h8.500" stroke-width="1.200"/>
<path d="M33 8h3.200l1.300-2l2 4l1.300-2h3.200" stroke-width="1"/></g>
<path d="M100 4.500l-4.500 5.600h3l-1.500 4.400l4.700-6h-3.100z" fill="#1a1f27"/>
</svg>
<div style="left:1915px;top:1040px;width:1px;height:2px;background:#b0b0b0"></div>

</body>
</html>
